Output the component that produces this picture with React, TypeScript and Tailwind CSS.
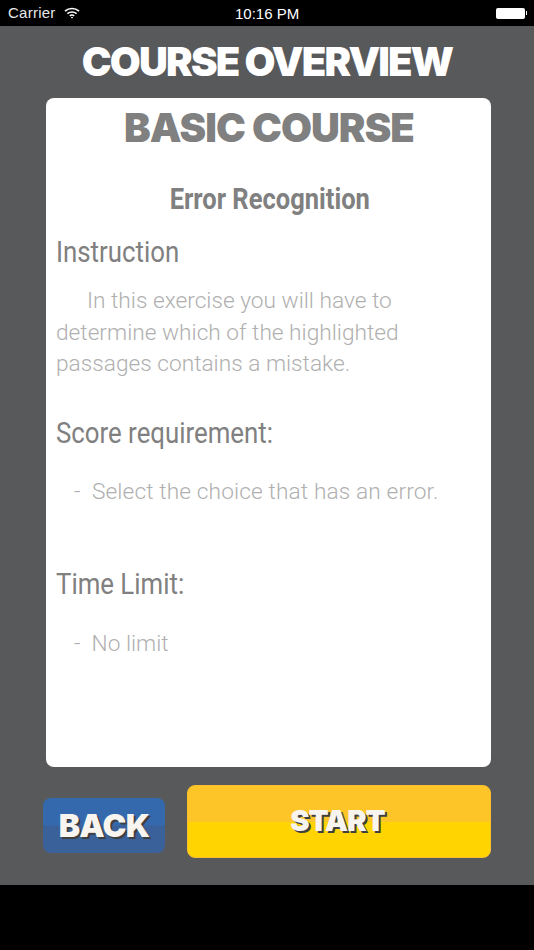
import React from 'react'

const display = "font-['Inter',sans-serif] font-black"
const condensed = "font-['Roboto',sans-serif] inline-block origin-left scale-x-[0.86] whitespace-nowrap"
const body = "font-['Roboto',sans-serif] font-light text-[#b0b0b0] text-[22.7px]"

const StatusBar = () => (
    <div className="h-[26px] bg-black text-white flex items-center justify-between pl-2 pr-[7px] font-['Liberation_Sans',sans-serif] text-[15px] relative">
        <div className="flex items-center gap-[8px] pt-px">
            <span className="text-[#e8e8e8] tracking-[0.25px]">Carrier</span>
            <svg width="16" height="12" viewBox="0 0 16 12" fill="none" stroke="white" strokeWidth="1.6" className="-mt-[1px]">
                <path d="M1 4.2C5 .6 11 .6 15 4.2" />
                <path d="M3.4 6.6C6 4.4 10 4.4 12.6 6.6" />
                <path d="M5.8 8.8C7 7.9 9 7.9 10.2 8.8" />
                <path d="M8 11.5 6.8 10.2C7.5 9.8 8.5 9.8 9.2 10.2Z" fill="white" stroke="none" />
            </svg>
        </div>
        <span className="absolute left-[235px] top-[5px] leading-[18px]">10:16 PM</span>
        <div className="flex items-center gap-px">
            <div className="w-[29px] h-[11px] bg-white rounded-[2px]" />
            <div className="w-px h-1 bg-white" />
        </div>
    </div>
)

const Section = ({ title, children }: { title: string; children: React.ReactNode }) => (
    <div>
        <h3 className={`${condensed} text-[30px] leading-[36px] text-[#808080]`}>{title}</h3>
        {children}
    </div>
)

const App = () => {
    return (
        <div className="w-[534px] h-[950px] bg-black overflow-hidden">
            <StatusBar />
            <div className="h-[859px] bg-[#58595b] flex flex-col">
                <h1 className={`${display} text-white text-[40px] leading-[72px] text-center tracking-[-1.85px] whitespace-nowrap`}>COURSE OVERVIEW</h1>

                <div className="ml-[46px] w-[445px] h-[669px] bg-white rounded-lg pl-[10px] pr-[11px]">
                    <h2 className={`${display} text-[#808080] text-[40px] leading-[60px] text-center tracking-[-0.95px] pl-[2px]`}>BASIC COURSE</h2>
                    <div className="text-center mt-[23px] h-[36px] pl-[4px]">
                        <span className="font-['Roboto',sans-serif] font-bold inline-block scale-x-[0.85] text-[30px] leading-[36px] text-[#808080] whitespace-nowrap">Error Recognition</span>
                    </div>
                    <div className="mt-[17px]">
                        <Section title="Instruction">
                            <p className={`${body} leading-[31.5px] mt-[15px] indent-[31px]`}>
                                In this exercise you will have to determine which of the highlighted passages contains a mistake.
                            </p>
                        </Section>
                    </div>
                    <div className="mt-[35px]">
                        <Section title="Score requirement:">
                            <p className={`${body} leading-[32px] mt-[25px] pl-[18px] whitespace-nowrap tracking-[0.12px]`}>-&nbsp; Select the choice that has an error.</p>
                        </Section>
                    </div>
                    <div className="mt-[58px]">
                        <Section title="Time Limit:">
                            <p className={`${body} leading-[32px] mt-[26px] pl-[18px]`}>-&nbsp; No limit</p>
                        </Section>
                    </div>
                </div>

                <div className="flex items-start ml-[43px] w-[448px] justify-between mt-[18px]">
                    <button className="w-[122px] h-[55px] mt-[13px] rounded-lg overflow-hidden bg-[linear-gradient(#346aad_0%,#346aad_49%,#3a6199_51%,#3a6199_100%)] flex items-center justify-center">
                        <span className={`${display} text-[#f8f5f0] text-[32px] leading-none tracking-[-0.7px] [text-shadow:2px_2px_0_#3f3f3f]`}>BACK</span>
                    </button>
                    <button className="w-[304px] h-[73px] rounded-lg overflow-hidden bg-[linear-gradient(#fec529_0%,#fec529_51%,#ffd400_51%,#ffd400_100%)] border border-[#fbc02d] flex items-center justify-center">
                        <span className={`${display} text-[#f8f5f0] text-[29px] leading-none tracking-[-0.9px] [text-shadow:2px_2px_0_#3f3f3f] -mt-[2px] -ml-[3px]`}>START</span>
                    </button>
                </div>
            </div>
        </div>
    )
}

export default App
